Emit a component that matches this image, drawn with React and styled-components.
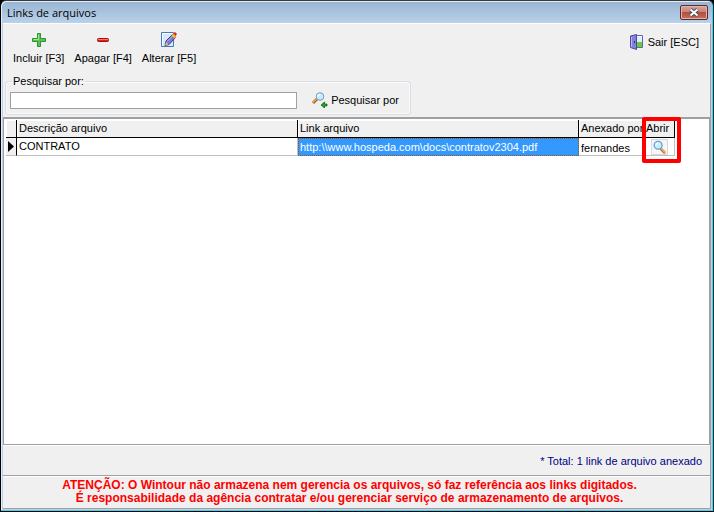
import React, { useState } from 'react';
import styled, { createGlobalStyle } from 'styled-components';

const GlobalStyle = createGlobalStyle`
  * {
    box-sizing: border-box;
  }
  body {
    margin: 0;
    background: #000;
    font: 11px/13px "Liberation Sans", Arial, sans-serif;
    color: #000;
  }
  button,
  input {
    font: inherit;
    color: inherit;
  }
`;

const Window = styled.main`
  display: flex;
  flex-direction: column;
  min-height: 100vh;
  padding: 1px 2px 2px 2px;
  background: linear-gradient(#98b4d2, #b9d1ea 22px);
  border: 1px solid #000;
  border-top-color: #35383d;
  border-right-color: #0a2a33;
  border-radius: 6px 6px 0 0;
  box-shadow: inset -1px -1px 0 #3fd4ee, inset 1px 1px 0 #e4eef9;
`;

const TitleBar = styled.header`
  display: flex;
  justify-content: space-between;
  align-items: center;
  height: 21px;
  padding: 0 3px 0 4px;
`;

const Title = styled.h1`
  margin: 0;
  font: 11px/20px "Open Sans", "Noto Sans", sans-serif;
`;

const CloseButton = styled.button`
  display: flex;
  align-items: center;
  justify-content: center;
  width: 28px;
  height: 15px;
  padding: 0;
  border: 1px solid #5a2a2c;
  border-radius: 2px;
  background: linear-gradient(#d9a49a, #c98277 45%, #b2503f 50%, #c4705f);
  box-shadow: inset 0 0 0 1px #e0b5ad;
`;

const Content = styled.div`
  display: flex;
  flex-direction: column;
  flex: 1;
  background: #f0f0f0;
  border-top: 1px solid #fff;
  border-right: 1px solid #a0a0a0;
  border-bottom: 1px solid #a0a0a0;
`;

const Toolbar = styled.nav`
  display: flex;
  align-items: flex-start;
  padding: 8px 8px 0 7px;
`;

const ToolButton = styled.button`
  display: flex;
  flex-direction: ${(props) => (props.$inline ? 'row' : 'column')};
  align-items: center;
  gap: ${(props) => (props.$inline ? '3px' : '4px')};
  margin-left: ${(props) => (props.$end ? 'auto' : '0')};
  padding: ${(props) => (props.$inline ? '2px 3px' : '0 3px')};
  margin-right: 4px;
  border: 0;
  background: none;
  white-space: nowrap;

  &:last-child {
    margin-right: 0;
  }
`;

const SearchBox = styled.fieldset`
  display: flex;
  align-items: center;
  width: 406px;
  max-width: 100%;
  margin: 10px 0 2px 2px;
  padding: 2px 8px 4px 4px;
  border: 1px solid #d5dfe5;
  border-radius: 3px;
  box-shadow: inset 0 0 0 1px #fafafa;
`;

const Legend = styled.legend`
  margin-left: 2px;
  padding: 0 1px;
`;

const SearchInput = styled.input`
  flex: 1;
  min-width: 0;
  height: 17px;
  margin-right: 12px;
  padding: 0 3px;
  border: 1px solid #a0a0a0;
  background: #fff;
  outline: 0;
`;

const GridPanel = styled.section`
  flex: 1;
  padding: 1px 0 0 2px;
  background: #fff;
  border: 1px solid #a0a0a0;
  border-top-width: 2px;
`;

const Grid = styled.table`
  width: 669px;
  max-width: 100%;
  table-layout: fixed;
  border-collapse: separate;
  border-spacing: 0;
`;

const HeadCell = styled.th`
  width: ${(props) => props.$width};
  height: 18px;
  padding: 0 0 0 2px;
  background: #f0f0f0;
  border-right: 1px solid #000;
  border-bottom: 1px solid #000;
  box-shadow: inset 1px 1px 0 #fff;
  font-weight: 400;
  text-align: left;
  white-space: nowrap;
`;

const Cell = styled.td`
  height: 18px;
  padding: 0 0 0 2px;
  border-right: 1px solid #c0c0c0;
  border-bottom: 1px solid #c0c0c0;
  white-space: nowrap;
`;

const MarkerCell = styled(Cell)`
  background: #f0f0f0;
  border-right-color: #000;

  svg {
    display: block;
  }
`;

const SelectedCell = styled(Cell)`
  background: #3399ff;
  border: 1px dotted #a05000;
  color: #fff;
  padding-left: 1px;
`;

const UserCell = styled(Cell)`
  padding-top: 3px;
`;

const OpenCell = styled(Cell)`
  position: relative;
  padding: 0;
`;

const OpenButton = styled.button`
  display: flex;
  align-items: center;
  justify-content: center;
  width: 17px;
  height: 16px;
  margin: 0 auto;
  padding: 0;
  border: 1px solid #d9d9d9;
  background: #f6f6f6;
`;

const Highlight = styled.span`
  position: absolute;
  inset: -21px -7px -8px -2px;
  border: 4px solid #f00;
  border-radius: 2px;
  pointer-events: none;
`;

const Total = styled.p`
  margin: 0;
  padding: 9px 8px 7px;
  border-top: 1px solid #fff;
  color: #000080;
  text-align: right;
`;

const Warning = styled.footer`
  padding: 3px 14px 3px 0;
  border-top: 1px solid #a0a0a0;
  box-shadow: inset 0 1px 0 #fff;
  color: #f00;
  font-size: 12px;
  font-weight: 700;
  text-align: center;
`;

const Icon = ({ children, size = 16 }) => (
  <svg width={size} height={size} viewBox="0 0 16 16" aria-hidden="true">
    {children}
  </svg>
);

const PlusIcon = () => (
  <Icon>
    <path d="M6.5 1.5h3v5h5v3h-5v5h-3v-5h-5v-3h5z" fill="#5ac152" stroke="#2c9130" />
    <path d="M7.5 2.5v5h-5" fill="none" stroke="#a5e69b" />
  </Icon>
);

const MinusIcon = () => (
  <Icon>
    <rect x="2.5" y="6.5" width="11" height="3" rx="1" fill="#e71e13" stroke="#a80f0b" />
    <path d="M3 7.5h10" stroke="#ff7768" />
  </Icon>
);

const EditIcon = () => (
  <Icon>
    <path d="M.5.5h12v14H.5z" fill="#d3e9ff" stroke="#4b78bd" />
    <path d="M1.5 13.5v-12h10" fill="none" stroke="#fff" />
    <path d="M4 13.5l1-4.500 6.500-6.500 3 3L8 12.500z" fill="#8179cf" stroke="#39377f" />
    <path d="M6 9.5l6-6" stroke="#bab4f0" />
    <path d="M4 13.5l1-3.500 2.500 2.500z" fill="#edbd6d" />
    <path d="M10.500 3.500l2-2 3 3-2 2z" fill="#efb72e" />
    <path d="M12.500 1.500L14 0l2 2-1.500 2z" fill="#dc2519" />
  </Icon>
);

const ExitIcon = () => (
  <Icon>
    <path d="M6.5 1.5h7v12h-7z" fill="#f6fbff" stroke="#6266ae" />
    <path d="M8 3h5v5H8z" fill="#dceffd" />
    <path d="M8 8h5v5H8z" fill="#66cc38" />
    <path d="M1.5 2l6-1.5v15l-6-2z" fill="#8381db" stroke="#4a4a9c" />
    <path d="M2.5 3v10" stroke="#b7b8f5" />
    <path d="M5.5 7v2" stroke="#292963" />
  </Icon>
);

const SearchIcon = () => (
  <Icon>
    <path d="M1 11l4-4" stroke="#a35b1a" strokeWidth="3" />
    <path d="M1 10.5l4-4" stroke="#f5a345" strokeWidth="1.5" />
    <circle cx="8" cy="4.5" r="3.8" fill="#c6edff" stroke="#6e9cc4" />
    <path d="M6 4.5a2 2 0 012-2" fill="none" stroke="#fff" strokeWidth="1.5" />
    <path d="M9 13l3.500-3v2H15v2h-2.500v2z" fill="#28a424" stroke="#116a14" strokeWidth=".8" />
  </Icon>
);

const LensIcon = () => (
  <Icon size={14}>
    <path d="M10 10l5 5" stroke="#b36c20" strokeWidth="3" />
    <path d="M10 9.5l5 5" stroke="#f5b34e" strokeWidth="1.5" />
    <circle cx="7" cy="6" r="4.5" fill="#c2f0ff" stroke="#6f9bcd" strokeWidth="1.5" />
    <path d="M4.5 6A2.500 2.500 0 017 3.500" fill="none" stroke="#fff" strokeWidth="1.5" />
  </Icon>
);

const App = () => {
  const [search, setSearch] = useState('');

  return (
    <Window>
      <GlobalStyle />
      <TitleBar>
        <Title>Links de arquivos</Title>
        <CloseButton aria-label="Fechar">
          <svg width="12" height="9" viewBox="0 0 12 9" aria-hidden="true">
            <path d="M2.5 1.5l7 6m0-6l-7 6" stroke="#494e5a" strokeWidth="4" />
            <path d="M2.5 1.5l7 6m0-6l-7 6" stroke="#fff" strokeWidth="2" />
          </svg>
        </CloseButton>
      </TitleBar>
      <Content>
        <Toolbar>
          <ToolButton><PlusIcon />Incluir [F3]</ToolButton>
          <ToolButton><MinusIcon />Apagar [F4]</ToolButton>
          <ToolButton><EditIcon />Alterar [F5]</ToolButton>
          <ToolButton $inline $end><ExitIcon />Sair [ESC]</ToolButton>
        </Toolbar>
        <SearchBox>
          <Legend><label htmlFor="search">Pesquisar por:</label></Legend>
          <SearchInput id="search" value={search} onChange={(e) => setSearch(e.target.value)} />
          <ToolButton $inline><SearchIcon />Pesquisar por</ToolButton>
        </SearchBox>
        <GridPanel>
          <Grid>
            <thead>
              <tr>
                <HeadCell $width="11px" aria-label="Registro" />
                <HeadCell $width="281px">Descrição arquivo</HeadCell>
                <HeadCell $width="281px">Link arquivo</HeadCell>
                <HeadCell $width="65px">Anexado por</HeadCell>
                <HeadCell $width="31px">Abrir</HeadCell>
              </tr>
            </thead>
            <tbody>
              <tr>
                <MarkerCell>
                  <svg width="6" height="11" viewBox="0 0 6 11" aria-hidden="true">
                    <path d="M0 0l6 5.5L0 11z" />
                  </svg>
                </MarkerCell>
                <Cell>CONTRATO</Cell>
                <SelectedCell>http:\\www.hospeda.com\docs\contratov2304.pdf</SelectedCell>
                <UserCell>fernandes</UserCell>
                <OpenCell>
                  <OpenButton aria-label="Abrir"><LensIcon /></OpenButton>
                  <Highlight />
                </OpenCell>
              </tr>
            </tbody>
          </Grid>
        </GridPanel>
        <Total>* Total: 1 link de arquivo anexado</Total>
        <Warning>
          ATENÇÃO: O Wintour não armazena nem gerencia os arquivos, só faz referência aos links digitados.
          <br />
          É responsabilidade da agência contratar e/ou gerenciar serviço de armazenamento de arquivos.
        </Warning>
      </Content>
    </Window>
  );
};

export default App;
